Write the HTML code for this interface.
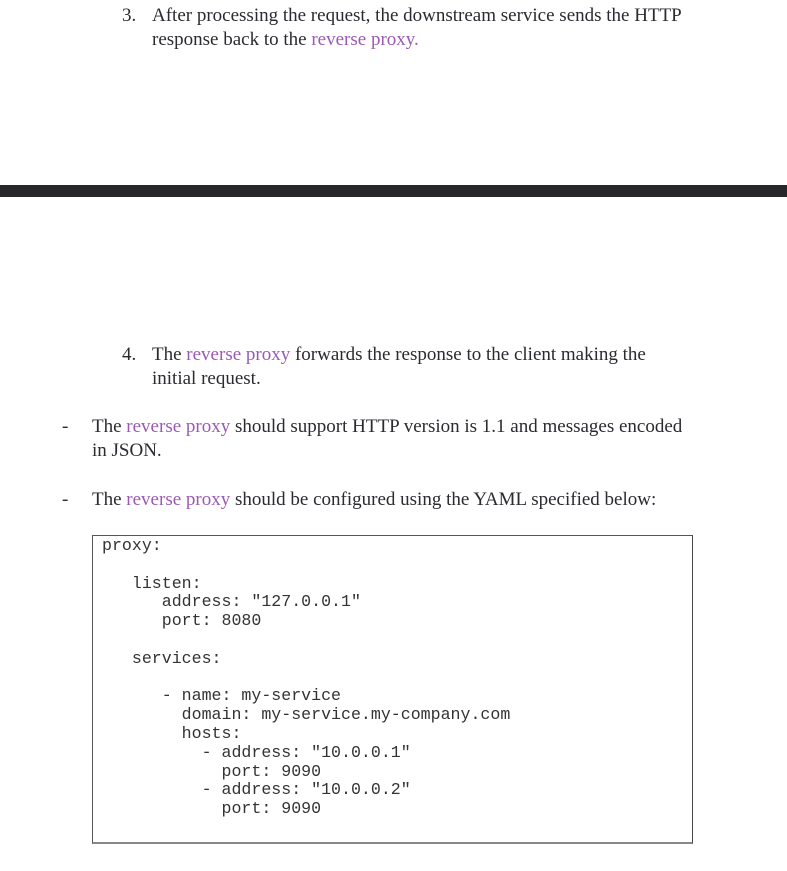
<!DOCTYPE html>
<html><head><meta charset="utf-8"><style>
html,body{margin:0;padding:0;background:#fff;width:787px;height:871px;overflow:hidden;position:relative}
.t{position:absolute;white-space:nowrap;font-family:"Liberation Serif",serif;font-size:19px;color:#2a2a30;line-height:24px}
.p{color:#9b59b6}
.bar{position:absolute;left:0;top:185px;width:787px;height:12px;background:#27272a}
.code{position:absolute;left:92px;top:535px;width:599px;height:306px;border:1px solid #555;border-right-color:#444;border-bottom:2px solid #888}
pre{position:absolute;left:102px;top:537px;margin:0;font-family:"Liberation Mono",monospace;font-size:16.6px;line-height:18.8px;color:#333}
</style></head><body>
<div class="t" style="left:122px;top:4px">3.</div>
<div class="t" style="left:152px;top:4px">After processing the request, the downstream service sends the HTTP</div>
<div class="t" style="left:152px;top:28px">response back to the <span class="p">reverse proxy.</span></div>
<div class="bar"></div>
<div class="t" style="left:122px;top:343px">4.</div>
<div class="t" style="left:152px;top:343px">The <span class="p">reverse proxy</span> forwards the response to the client making the</div>
<div class="t" style="left:152px;top:367px">initial request.</div>
<div class="t" style="left:62px;top:415px">-</div>
<div class="t" style="left:92px;top:415px">The <span class="p">reverse proxy</span> should support HTTP version is 1.1 and messages encoded</div>
<div class="t" style="left:92px;top:439px">in JSON.</div>
<div class="t" style="left:62px;top:488px">-</div>
<div class="t" style="left:92px;top:488px">The <span class="p">reverse proxy</span> should be configured using the YAML specified below:</div>
<div class="code"></div>
<pre>proxy:

   listen:
      address: "127.0.0.1"
      port: 8080

   services:

      - name: my-service
        domain: my-service.my-company.com
        hosts:
          - address: "10.0.0.1"
            port: 9090
          - address: "10.0.0.2"
            port: 9090</pre>
</body></html>
